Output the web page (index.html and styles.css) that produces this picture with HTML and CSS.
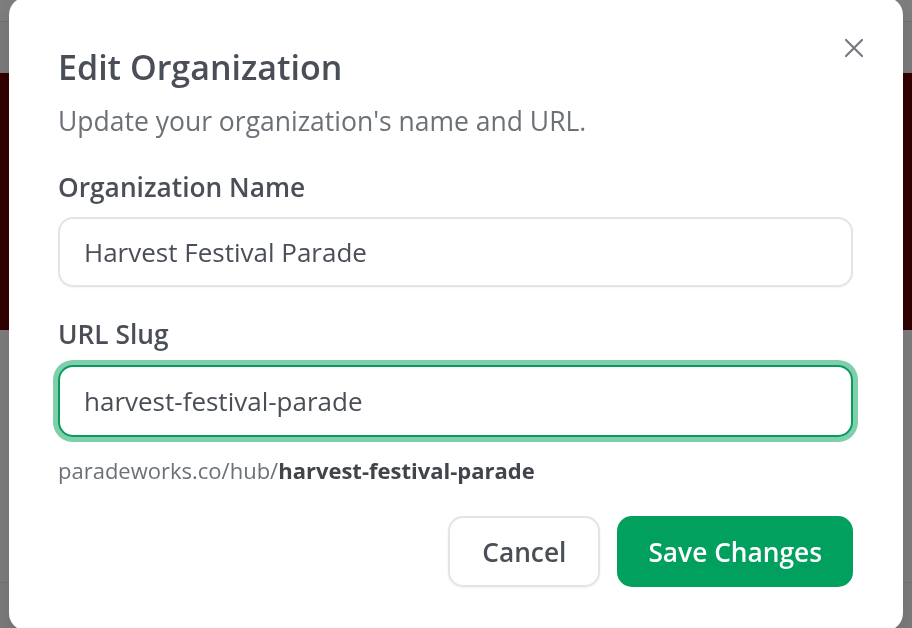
FILE: index.html
```html
<!DOCTYPE html>
<html lang="en">
<head>
<meta charset="utf-8">
<title>Edit Organization</title>
<link rel="stylesheet" href="styles.css">
</head>
<body>
<div class="page">
  <div class="topbar"></div>
  <div class="nav"></div>
  <div class="hero"></div>
  <div class="main"></div>
  <div class="footer"></div>
</div>
<div class="overlay">
  <div class="modal" role="dialog" aria-labelledby="title">
    <button class="close" aria-label="Close">
      <svg viewBox="0 0 24 24" width="24" height="24"><path d="M4 4L20 20M20 4L4 20" stroke="currentColor" stroke-width="2.2" stroke-linecap="round" fill="none"/></svg>
    </button>
    <h2 id="title" class="title">Edit Organization</h2>
    <p class="subtitle">Update your organization's name and URL.</p>
    <label class="label" for="name">Organization Name</label>
    <input id="name" class="input" type="text" value="Harvest Festival Parade">
    <label class="label label-slug" for="slug">URL Slug</label>
    <input id="slug" class="input input-focus" type="text" value="harvest-festival-parade">
    <p class="helper">paradeworks.co/hub/<strong>harvest-festival-parade</strong></p>
    <div class="actions">
      <button class="btn btn-cancel">Cancel</button>
      <button class="btn btn-save">Save Changes</button>
    </div>
  </div>
</div>
</body>
</html>
```
FILE: styles.css
```css
* { box-sizing: border-box; }
html, body { margin: 0; padding: 0; }
body {
  font-family: "Open Sans", "Noto Sans", sans-serif;
  background: #ffffff;
  height: 628px;
  overflow: hidden;
}
.page { display: flex; flex-direction: column; height: 628px; }
.topbar { height: 22px; background: #ffffff; border-bottom: 1px solid #e4e4e4; }
.nav { height: 51px; background: #fafafa; }
.hero { height: 257px; background: #660000; }
.main { height: 253px; background: #ffffff; border-bottom: 1px solid #ececec; }
.footer { flex: 1; background: #fafafa; }

.overlay {
  position: fixed;
  inset: 0;
  background: rgba(0, 0, 0, 0.5);
  display: flex;
  align-items: center;
  justify-content: center;
}
.modal {
  position: relative;
  width: 894px;
  flex-shrink: 0;
  background: #ffffff;
  border-radius: 18px;
  padding: 50px 50px 44px 49px;
  display: flex;
  flex-direction: column;
  box-shadow: 0 10px 30px rgba(0,0,0,0.15);
}
.close {
  position: absolute;
  top: 39px;
  right: 37px;
  width: 24px;
  height: 24px;
  padding: 0;
  border: 0;
  background: none;
  color: #767a81;
  display: flex;
}
.title {
  margin: 0;
  font-size: 34px;
  line-height: 40px;
  font-weight: 600;
  color: #4a4f57;
}
.subtitle {
  margin: 16px 0 0;
  font-size: 26.5px;
  line-height: 36px;
  color: #6c7178;
}
.label {
  margin-top: 30px;
  font-size: 26.3px;
  line-height: 36px;
  font-weight: 600;
  color: #4a4f57;
}
.label-slug { margin-top: 29px; }
.input {
  margin-top: 12px;
  height: 70px;
  width: 100%;
  border: 2px solid #e3e4e6;
  border-radius: 15px;
  padding: 0 24px;
  font-family: inherit;
  font-size: 26px;
  color: #4a4f57;
  background: #fff;
  box-shadow: 0 1px 2px rgba(0,0,0,0.05);
  outline: none;
}
.input-focus {
  margin-top: 13px;
  height: 72px;
  border: 2px solid #079b5e;
  box-shadow: 0 0 0 5px #7fcfac;
}
.helper {
  margin: 19px 0 0;
  font-size: 22px;
  line-height: 28px;
  color: #6c7178;
}
.helper strong { font-weight: 700; color: #40454c; }
.actions {
  margin-top: 32px;
  display: flex;
  justify-content: flex-end;
  gap: 17px;
}
.btn {
  height: 71px;
  padding: 0 32px;
  border-radius: 15px;
  font-family: inherit;
  font-size: 26.3px;
  font-weight: 600;
}
.btn-cancel {
  background: #ffffff;
  border: 2px solid #e3e4e6;
  color: #4a4f57;
  box-shadow: 0 1px 3px rgba(0,0,0,0.06);
}
.btn-save {
  background: #02a05e;
  border: 0;
  color: #ffffff;
  padding: 0 31px;
}
```
